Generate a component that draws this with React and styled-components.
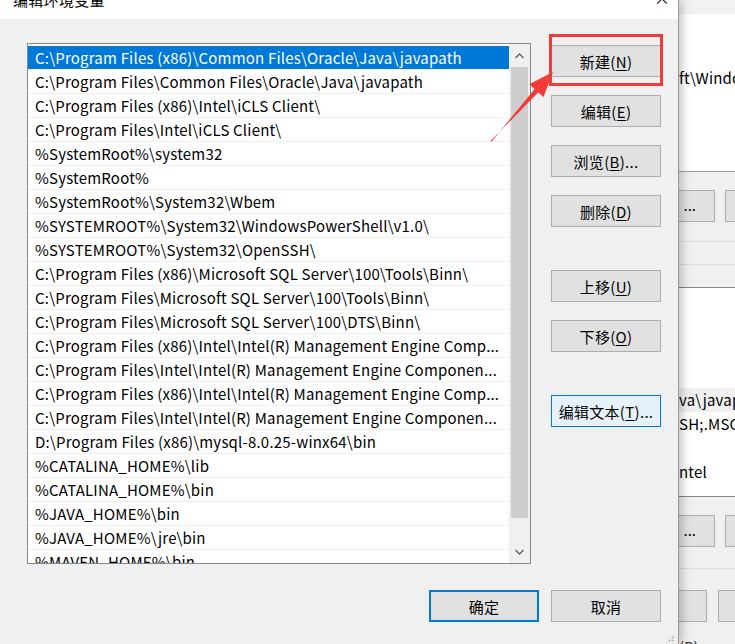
import React from "react";
import styled, { createGlobalStyle } from "styled-components";

const GlobalStyle = createGlobalStyle`
  html, body {
    margin: 0;
    padding: 0;
    background: #ffffff;
  }
  body {
    font-family: "Noto Sans CJK SC", "Noto Sans", sans-serif;
    font-size: 15px;
    color: #000;
  }
`;

const paths = [
  "C:\\Program Files (x86)\\Common Files\\Oracle\\Java\\javapath",
  "C:\\Program Files\\Common Files\\Oracle\\Java\\javapath",
  "C:\\Program Files (x86)\\Intel\\iCLS Client\\",
  "C:\\Program Files\\Intel\\iCLS Client\\",
  "%SystemRoot%\\system32",
  "%SystemRoot%",
  "%SystemRoot%\\System32\\Wbem",
  "%SYSTEMROOT%\\System32\\WindowsPowerShell\\v1.0\\",
  "%SYSTEMROOT%\\System32\\OpenSSH\\",
  "C:\\Program Files (x86)\\Microsoft SQL Server\\100\\Tools\\Binn\\",
  "C:\\Program Files\\Microsoft SQL Server\\100\\Tools\\Binn\\",
  "C:\\Program Files\\Microsoft SQL Server\\100\\DTS\\Binn\\",
  "C:\\Program Files (x86)\\Intel\\Intel(R) Management Engine Comp...",
  "C:\\Program Files\\Intel\\Intel(R) Management Engine Componen...",
  "C:\\Program Files (x86)\\Intel\\Intel(R) Management Engine Comp...",
  "C:\\Program Files\\Intel\\Intel(R) Management Engine Componen...",
  "D:\\Program Files (x86)\\mysql-8.0.25-winx64\\bin",
  "%CATALINA_HOME%\\lib",
  "%CATALINA_HOME%\\bin",
  "%JAVA_HOME%\\bin",
  "%JAVA_HOME%\\jre\\bin",
  "%MAVEN_HOME%\\bin",
];

const Screen = styled.div`
  position: relative;
  display: flex;
  width: 735px;
  height: 644px;
  overflow: hidden;
`;

const Dialog = styled.div`
  position: relative;
  z-index: 2;
  width: 678px;
  flex-shrink: 0;
  display: flex;
  flex-direction: column;
  background: #f0f0f0;
  border-right: 1px solid #9a9a9a;
  box-shadow: 2px 0 10px rgba(0, 0, 0, 0.28);
`;

const TitleBar = styled.div`
  height: 19px;
  flex-shrink: 0;
  background: #ffffff;
  display: flex;
  justify-content: space-between;
  overflow: hidden;
`;

const Title = styled.div`
  margin: -10px 0 0 13px;
  line-height: 20px;
  font-size: 15px;
  letter-spacing: 0.3px;
`;

const Close = styled.div`
  margin: -12px 5px 0 0;
  width: 22px;
  line-height: 20px;
  font-size: 20px;
  text-align: center;
  font-family: "DejaVu Sans", sans-serif;
  font-weight: 200;
`;

const Body = styled.div`
  display: flex;
  gap: 20px;
  padding: 24px 0 0 27px;
`;

const ListBox = styled.div`
  width: 502px;
  height: 519px;
  border: 1px solid #828790;
  background: #ffffff;
  display: flex;
  overflow: hidden;
`;

const Rows = styled.div`
  width: 481px;
  padding-top: 2px;
  overflow: hidden;
`;

const Row = styled.div`
  height: 23px;
  line-height: 23px;
  border-bottom: 1px solid #f0f0f0;
  padding-left: 7px;
  letter-spacing: 0.2px;
  white-space: nowrap;
  overflow: hidden;
  background: ${(p) => (p.$selected ? "#0078d7" : "transparent")};
  color: ${(p) => (p.$selected ? "#ffffff" : "#000000")};
`;

const ScrollBar = styled.div`
  flex: 1;
  display: flex;
  flex-direction: column;
  align-items: center;
  background: #f0f0f0;
`;

const ArrowBox = styled.div`
  height: 23px;
  width: 100%;
  display: flex;
  align-items: center;
  justify-content: center;
`;

const Thumb = styled.div`
  width: 17px;
  height: 451px;
  background: #cdcdcd;
`;

const Track = styled.div`
  flex: 1;
`;

const ButtonColumn = styled.div`
  display: flex;
  flex-direction: column;
  padding-top: 2px;
`;

const Button = styled.div`
  width: ${(p) => (p.$primary ? "106px" : "108px")};
  height: ${(p) => (p.$primary ? "28px" : "30px")};
  border: ${(p) =>
    p.$primary ? "2px solid #0078d7" : p.$focus ? "1px solid #0078d7" : "1px solid #adadad"};
  background: ${(p) => (p.$focus ? "#e5f1fb" : "#e1e1e1")};
  display: flex;
  align-items: center;
  justify-content: center;
  font-size: 15px;
  letter-spacing: 0.3px;
  margin-top: ${(p) => p.$gap || 0}px;
  flex-shrink: 0;

  u {
    text-decoration-thickness: 1px;
    text-underline-offset: 2px;
  }
`;

const Footer = styled.div`
  display: flex;
  justify-content: flex-end;
  gap: 12px;
  padding: 26px 17px 0 0;
`;

const Grip = styled.div`
  position: absolute;
  right: 3px;
  bottom: 1px;
  width: 10px;
  height: 10px;
  background-image: radial-gradient(#b8b8b8 45%, transparent 50%);
  background-size: 3px 3px;
  clip-path: polygon(100% 0, 100% 100%, 0 100%);
`;

const BackWindow = styled.div`
  flex: 1;
  display: flex;
  flex-direction: column;
  background: #f0f0f0;
  overflow: hidden;
  white-space: nowrap;
`;

const BackStrip = styled.div`
  height: 14px;
  flex-shrink: 0;
  background: #f2f2f2;
`;

const BackWhite = styled.div`
  height: 158px;
  flex-shrink: 0;
  background: #ffffff;
  border-bottom: 1px solid #a0a0a0;
  padding-top: 53px;
  box-sizing: border-box;
  line-height: 22px;
  letter-spacing: 0.2px;
`;

const BackRow = styled.div`
  display: flex;
  flex-shrink: 0;
  gap: ${(p) => p.$gap || 10}px;
  padding-top: ${(p) => p.$top}px;
  height: ${(p) => p.$h}px;
  box-sizing: border-box;
  border-bottom: ${(p) => (p.$line ? "1px solid #dcdcdc" : "none")};
`;

const BackButton = styled.div`
  width: ${(p) => p.$w}px;
  height: 32px;
  flex-shrink: 0;
  margin-left: ${(p) => p.$ml || 0}px;
  border: 1px solid #adadad;
  background: #e1e1e1;
  line-height: 28px;
  text-align: right;
  padding-right: 18px;
  box-sizing: border-box;
`;

const BackLine = styled.div`
  height: 22px;
  flex-shrink: 0;
  border-bottom: 1px solid ${(p) => p.$color};
`;

const BackList = styled.div`
  height: 209px;
  flex-shrink: 0;
  background: #ffffff;
  border-bottom: 1px solid #828790;
  padding-top: 100px;
  box-sizing: border-box;
  letter-spacing: 0.2px;
`;

const BackItem = styled.div`
  height: 24px;
  line-height: 24px;
  background: ${(p) => (p.$hl ? "#f0f0f0" : "transparent")};
  margin-bottom: ${(p) => p.$mb || 0}px;
`;

const BackBottomText = styled.div`
  margin-top: 12px;
  line-height: 20px;
  color: #333;
`;

const Overlay = styled.svg`
  position: absolute;
  left: 0;
  top: 0;
  z-index: 5;
  pointer-events: none;
`;

const Mark = styled.div`
  position: absolute;
  z-index: 6;
  left: 549px;
  top: 34px;
  width: 114px;
  height: 52px;
  box-sizing: border-box;
  border: 3px solid #f23b38;
`;

const Chevron = ({ up }) => (
  <svg width="9" height="6" viewBox="0 0 9 6">
    <path
      d={up ? "M0.5 5 L4.5 1 L8.5 5" : "M0.5 1 L4.5 5 L8.5 1"}
      fill="none"
      stroke="#606060"
      strokeWidth="1.3"
    />
  </svg>
);

const Label = ({ text, k, tail = "" }) => (
  <span>
    {text}(<u>{k}</u>){tail}
  </span>
);

export default function App() {
  return (
    <>
      <GlobalStyle />
      <Screen>
        <Dialog>
          <TitleBar>
            <Title>编辑环境变量</Title>
            <Close>×</Close>
          </TitleBar>
          <Body>
            <ListBox>
              <Rows>
                {paths.map((p, i) => (
                  <Row key={i} $selected={i === 0}>
                    {p}
                  </Row>
                ))}
              </Rows>
              <ScrollBar>
                <ArrowBox>
                  <Chevron up />
                </ArrowBox>
                <Thumb />
                <Track />
                <ArrowBox>
                  <Chevron />
                </ArrowBox>
              </ScrollBar>
            </ListBox>
            <ButtonColumn>
              <Button>
                <Label text="新建" k="N" />
              </Button>
              <Button $gap={18}>
                <Label text="编辑" k="E" />
              </Button>
              <Button $gap={18}>
                <Label text="浏览" k="B" tail="..." />
              </Button>
              <Button $gap={18}>
                <Label text="删除" k="D" />
              </Button>
              <Button $gap={43}>
                <Label text="上移" k="U" />
              </Button>
              <Button $gap={18}>
                <Label text="下移" k="O" />
              </Button>
              <Button $gap={43} $focus>
                <Label text="编辑文本" k="T" tail="..." />
              </Button>
            </ButtonColumn>
          </Body>
          <Footer>
            <Button $primary>确定</Button>
            <Button>取消</Button>
          </Footer>
          <Grip />
        </Dialog>

        <BackWindow>
          <BackStrip />
          <BackWhite>ft\WindowsApps</BackWhite>
          <BackRow $top={18} $h={70} $line>
            <BackButton $w={46} $ml={-10}>...</BackButton>
            <BackButton $w={60} />
          </BackRow>
          <BackLine $color="#dcdcdc" />
          <BackLine $color="#828790" />
          <BackList>
            <BackItem $hl>va\javapath</BackItem>
            <BackItem $mb={24}>SH;.MSC</BackItem>
            <BackItem>ntel</BackItem>
          </BackList>
          <BackRow $top={18} $h={72} $line>
            <BackButton $w={46} $ml={-10}>...</BackButton>
            <BackButton $w={60} />
          </BackRow>
          <BackRow $top={21} $h={56} $gap={11}>
            <BackButton $w={32} $ml={-4} />
            <BackButton $w={60} />
          </BackRow>
          <BackBottomText>(P)</BackBottomText>
        </BackWindow>

        <Overlay width="735" height="644" viewBox="0 0 735 644">
          <polygon
            points="490.5,141 538.2,92.6 543.5,97 553,72 529.2,84.3 534.6,89.1 491.5,141.8"
            fill="#f23b38"
          />
        </Overlay>
        <Mark />
      </Screen>
    </>
  );
}
